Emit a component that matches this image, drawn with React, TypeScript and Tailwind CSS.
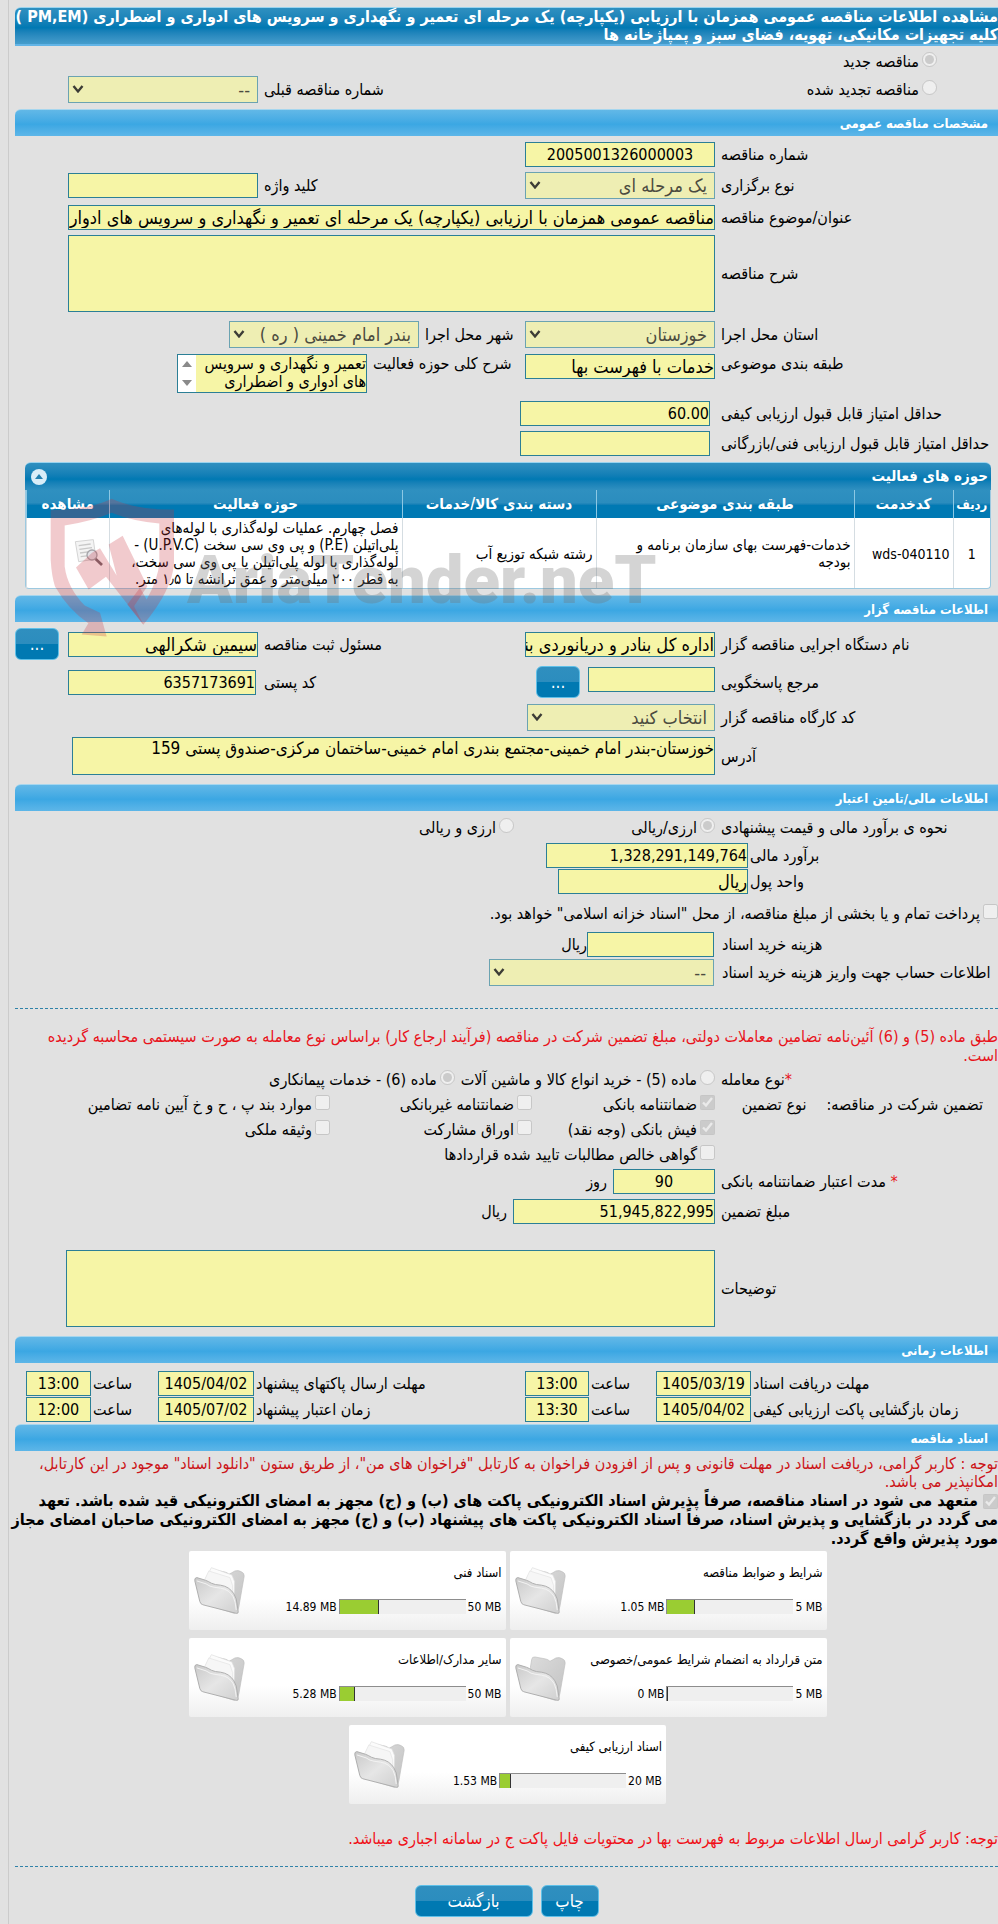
import type { ReactNode } from "react";

const cx = (...parts: (string | undefined)[]) => parts.filter(Boolean).join(" ");

const fieldBase = "rounded-none border border-[#2b7f96] bg-[#f6f5a6] text-black outline-none block";

function Field({ id, value = "", className, kind = "text" }: { id: string; value?: string; className?: string; kind?: "text" | "number" | "center" }) {
  const look = kind === "text" ? "text-right text-[18px]" : kind === "number" ? "text-right text-[16px]" : "text-center text-[16px]";
  return <input id={id} type="text" readOnly defaultValue={value} className={cx(fieldBase, "h-[25px] shrink-0", look, className)} />;
}

function Select({ id, value, className }: { id: string; value: string; className?: string }) {
  return (
    <div className={cx("relative shrink-0", className)}>
      <select id={id} disabled className="block h-[27px] w-full appearance-none rounded-none border border-[#6ba3b1] bg-[#eeeeb3] pr-[7px] pl-5 text-[18px] leading-6 text-[#4b4b40] opacity-100">
        <option>{value}</option>
      </select>
      <svg viewBox="0 0 12 8" className="pointer-events-none absolute top-[9px] left-1 h-2 w-3" fill="none" stroke="#3c3c36" strokeWidth="2.4">
        <path d="M1.500 1 6 6.400 10.500 1" />
      </svg>
    </div>
  );
}

function Label({ htmlFor, children, className }: { htmlFor: string; children: ReactNode; className?: string }) {
  return (
    <label htmlFor={htmlFor} className={cx("block text-left whitespace-nowrap", className)}>
      {children}
    </label>
  );
}

const main = "w-[277px] shrink-0";

function Row({ children, className }: { children: ReactNode; className?: string }) {
  return <div className={cx("flex gap-[6px] pl-[59px]", className)}>{children}</div>;
}

function SectionBar({ title, className }: { title: string; className?: string }) {
  return (
    <h2 className={cx("ml-[6px] flex h-[27px] items-center rounded-tl-md border-t border-[#a6d6ee] bg-linear-to-b from-[#62b8e7] from-0% via-[#3ba7e3] via-55% to-[#5db6e8] to-100% pr-[10px] text-[13px] font-bold text-white", className)}>
      {title}
    </h2>
  );
}

function Tick({ type, id, name, checked, children, className }: { type: "radio" | "checkbox"; id: string; name?: string; checked?: boolean; children: ReactNode; className?: string }) {
  return (
    <span className={cx("flex items-center gap-[3px] whitespace-nowrap", className)}>
      <input type={type} id={id} name={name} disabled defaultChecked={checked} className="mb-1 h-[15px] w-[15px] shrink-0" />
      <label htmlFor={id}>{children}</label>
    </span>
  );
}

const blue = "bg-linear-to-b from-[#2f8fbf] from-0% via-[#2c8dbe] via-49% to-[#0079b2] to-50%";

function BlueButton({ children, className, label }: { children: ReactNode; className?: string; label?: string }) {
  return (
    <button type="button" aria-label={label} className={cx("flex h-8 shrink-0 items-center justify-center rounded-md border border-[#5fc0e8] text-[17px] leading-none text-white", blue, className)}>
      {children}
    </button>
  );
}

function Folder({ empty }: { empty?: boolean }) {
  return (
    <svg viewBox="0 0 160 145" className="h-12 w-[54px] shrink-0">
      <defs>
        <linearGradient id="front" x1="0" y1="0" x2="1" y2="1">
          <stop offset="0" stopColor="#c9c9c9" />
          <stop offset="0.5" stopColor="#e6e6e6" />
          <stop offset="1" stopColor="#cfcfcf" />
        </linearGradient>
        <linearGradient id="back" x1="0" y1="0" x2="1" y2="1">
          <stop offset="0" stopColor="#dcdcdc" />
          <stop offset="1" stopColor="#c2c2c2" />
        </linearGradient>
      </defs>
      <path d="M48 40 52 16q1-8 10-7l32 6q7 1 13 7 8-4 18-10 10-3 19 2 10 4 9 14l-16 92q-2 16-14 20L60 120Z" fill="url(#back)" stroke="#bdbdbd" strokeWidth="2" />
      {!empty && (
        <>
          <path d="M38 32 54 2l62 22 8 20-2 72-84-40Z" fill="#fbfbfb" stroke="#dedede" strokeWidth="2" />
          <path d="M34 38 46 12l64 20 8 24v54L40 80Z" fill="#f6f6f6" stroke="#e2e2e2" strokeWidth="2" />
        </>
      )}
      <path d="M4 42q-2-9 6-10l26 8q8 3 18 9 10 5 28 6 26 4 40 26 9 14 10 34l3 20q1 6-6 5L28 114q-7-2-9-10Z" fill="url(#front)" stroke="#aeaeae" strokeWidth="3" />
      <path d="M10 42l28 9q12 9 24 10l20 3q26 4 38 26 7 14 9 40" fill="none" stroke="#f3f3f3" strokeWidth="3" />
    </svg>
  );
}

function DocCard({ title, used, total, percent }: { title: string; used: string; total: string; percent: number }) {
  return (
    <article className="flex h-[79px] w-[317px] items-center justify-between rounded-xs bg-linear-to-b from-white from-60% to-[#efefef] pl-1">
      <div className="mb-1 flex grow flex-col gap-4 pr-1">
        <h3 className="text-[13px] leading-5 whitespace-nowrap">{title}</h3>
        <div dir="ltr" className="flex items-center justify-end gap-[2px] text-[12px] leading-4 whitespace-nowrap">
          <span>{used}</span>
          <span className="h-[15px] w-[127px] border-t border-l border-[#8d8d8d] bg-[#efefef]">
            <span className="block h-full border-r border-[#333] bg-[#9acd32]" style={{ width: `${percent}%` }} />
          </span>
          <span>{total}</span>
        </div>
      </div>
      <Folder empty={percent === 0} />
    </article>
  );
}

function Watermark() {
  return (
    <div aria-hidden="true" dir="ltr" className="pointer-events-none absolute top-[34px] left-[25px] z-10 flex">
      <svg viewBox="150 20 375 425" className="h-[142px] w-[125px] shrink-0" fill="#c8323c" fillOpacity="0.26">
        <path fillRule="evenodd" d="M152 62Q270 60 335 28q75 34 187 32v160q-4 80-92 186L382 345l38-50 20 35q34-60 38-110V102Q400 96 335 70 275 96 194 108v122q8 64 60 118l46 22 20 71-75-6 20-34q-60-40-100-110-10-30-13-80Z" />
        <path d="M326 165 368 139 442 290 402 350 430 405 318 262 266 300 228 234 276 190 300 176 350 258Z" />
      </svg>
      <span className="mt-[42px] ml-3 font-['Roboto',sans-serif] text-[67px] leading-[84px] font-black whitespace-nowrap text-[#707070]/30">AriaTender.neT</span>
    </div>
  );
}

const th = "border-l border-[#8cc8e4] font-bold text-white";
const td = "border-l border-[#d5dde2] px-[3px] pt-[2px] leading-[17px]";

export default function App() {
  return (
    <div dir="rtl" className="min-h-screen overflow-x-hidden bg-[#e1e1e1] pl-2 font-['DejaVu_Sans_Condensed','DejaVu_Sans',sans-serif] text-[16px] leading-[19px] text-black">
      <main className="min-h-screen border-l border-[#cbcbcb] pt-[7px]">
        <h1 className="ml-[6px] rounded-tl-md border-t border-b-2 border-t-[#9ad3ee] border-b-[#62b4e6] bg-linear-to-b from-[#2f90c0] from-0% via-[#0079b3] via-55% to-[#459dcc] to-100% text-[16px] leading-[18px] font-bold text-white">
          مشاهده اطلاعات مناقصه عمومی همزمان با ارزیابی (یکپارچه) یک مرحله ای تعمیر و نگهداری و سرویس های ادواری و اضطراری (PM,EM )
          <br />
          کلیه تجهیزات مکانیکی، تهویه، فضای سبز و پمپاژخانه ها
        </h1>

        <div className="mt-[3px] flex h-6 items-center pr-[61px]">
          <Tick type="radio" id="new" name="renewal" checked>مناقصه جدید</Tick>
        </div>
        <Row className="mt-[3px] h-[27px] items-center">
          <Tick type="radio" id="renewed" name="renewal" className="pr-[61px]">مناقصه تجدید شده</Tick>
          <Label htmlFor="prev" className="grow">شماره مناقصه قبلی</Label>
          <Select id="prev" value="--" className="w-[190px]" />
        </Row>

        <SectionBar title="مشخصات مناقصه عمومی" className="mt-[6px]" />
        <Row className="mt-[6px] items-center">
          <Label htmlFor="number" className={main}>شماره مناقصه</Label>
          <Field id="number" value="2005001326000003" kind="center" className="w-[190px]" />
        </Row>
        <Row className="mt-[5px] items-center">
          <Label htmlFor="type" className={main}>نوع برگزاری</Label>
          <Select id="type" value="یک مرحله ای" className="w-[190px]" />
          <Label htmlFor="keyword" className="grow">کلید واژه</Label>
          <Field id="keyword" className="w-[190px]" />
        </Row>
        <Row className="mt-[6px] items-center">
          <Label htmlFor="title" className={main}>عنوان/موضوع مناقصه</Label>
          <Field id="title" value="مناقصه عمومی همزمان با ارزیابی (یکپارچه) یک مرحله ای تعمیر و نگهداری و سرویس های ادواری و اضطراری" className="min-w-0 flex-1" />
        </Row>
        <Row className="mt-[5px] items-center">
          <Label htmlFor="desc" className={main}>شرح مناقصه</Label>
          <textarea id="desc" readOnly className={cx(fieldBase, "h-[77px] flex-1 resize-none")} />
        </Row>
        <Row className="mt-[9px] items-center">
          <Label htmlFor="province" className={main}>استان محل اجرا</Label>
          <Select id="province" value="خوزستان" className="w-[190px]" />
          <Label htmlFor="city" className="w-[94px]">شهر محل اجرا</Label>
          <Select id="city" value="بندر امام خمینی ( ره )" className="w-[190px]" />
        </Row>
        <Row className="mt-[6px]">
          <Label htmlFor="category" className={main}>طبقه بندی موضوعی</Label>
          <Field id="category" value="خدمات با فهرست بها" className="w-[190px]" />
          <Label htmlFor="scope" className="w-[146px]">شرح کلی حوزه فعالیت</Label>
          <div className="flex h-[39px] w-[190px] border border-[#2b7f96] bg-[#f6f5a6]">
            <textarea id="scope" readOnly defaultValue={"تعمیر و نگهداری و سرویس های ادواری و اضطراری"} className="block min-w-0 flex-1 resize-none overflow-hidden text-[16px] leading-[18px] outline-none" />
            <span className="flex w-[18px] flex-col items-center justify-between bg-white py-[6px]">
              <svg viewBox="0 0 10 6" className="h-[6px] w-[10px]" fill="#8a8a8a"><path d="M5 0 10 6H0Z" /></svg>
              <svg viewBox="0 0 10 6" className="h-[6px] w-[10px]" fill="#8a8a8a"><path d="M5 6 0 0h10Z" /></svg>
            </span>
          </div>
        </Row>
        <Row className="mt-2 items-center">
          <Label htmlFor="minq" className={main}>حداقل امتیاز قابل قبول ارزیابی کیفی</Label>
          <Field id="minq" value="60.00" kind="number" className="mr-[5px] w-[190px]" />
        </Row>
        <Row className="mt-[5px] items-center">
          <Label htmlFor="mint" className={main}>حداقل امتیاز قابل قبول ارزیابی فنی/بازرگانی</Label>
          <Field id="mint" kind="number" className="mr-[5px] w-[190px]" />
        </Row>

        <section className="relative mt-[6px] mr-[7px] ml-4">
          <header className="flex h-7 items-center justify-between rounded-t-md border-t border-[#9ad3ee] bg-linear-to-b from-[#2f90c0] from-0% via-[#0079b3] via-60% to-[#2f90c0] to-100% pr-[3px] pl-[6px]">
            <h3 className="text-[15px] font-bold text-white">حوزه های فعالیت</h3>
            <button type="button" aria-label="بستن" className="flex h-4 w-4 items-center justify-center rounded-full bg-[#d9edf8]">
              <svg viewBox="0 0 8 5" className="h-[5px] w-2" fill="#2480b0"><path d="M4 0 8 5H0Z" /></svg>
            </button>
          </header>
          <div className="rounded-b-sm border border-t-0 border-[#9cc9e0] bg-white">
            <table className="w-full table-fixed border-collapse text-[15px]">
              <thead>
                <tr className="h-7 bg-linear-to-b from-[#2f90c0] from-0% via-[#2b8dbe] via-45% to-[#0079b3] to-55%">
                  <th className={cx(th, "w-[37px] text-[13px]")}>ردیف</th>
                  <th className={cx(th, "w-[99px]")}>کدخدمت</th>
                  <th className={cx(th, "w-[258px]")}>طبقه بندی موضوعی</th>
                  <th className={cx(th, "w-[194px]")}>دسته بندی کالا/خدمات</th>
                  <th className={cx(th, "w-[293px]")}>حوزه فعالیت</th>
                  <th className={th}>مشاهده</th>
                </tr>
              </thead>
              <tbody>
                <tr className="h-[70px]">
                  <td className={cx(td, "text-center text-[14px]")}>1</td>
                  <td dir="ltr" className={cx(td, "text-right text-[14px]")}>wds-040110</td>
                  <td className={td}>خدمات-فهرست بهای سازمان برنامه و<br />بودجه</td>
                  <td className={td}>رشته شبکه توزیع آب</td>
                  <td className={cx(td, "whitespace-nowrap")}>
                    فصل چهارم. عملیات لوله‌گذاری با لوله‌های<br />
                    پلی‌اتیلن (P.E) و پی وی سی سخت (U.P.V.C) -<br />
                    لوله‌گذاری با لوله پلی‌اتیلن یا پی وی سی سخت،<br />
                    به قطر ۲۰۰ میلی‌متر و عمق ترانشه تا ۱٫۵ متر.
                  </td>
                  <td className={td}>
                    <button type="button" aria-label="مشاهده" className="mr-[2px] block">
                      <svg viewBox="0 0 90 90" className="h-[30px] w-[30px]">
                        <path d="M4 8 58 2l8 58-52 8Z" fill="#f4f4f4" stroke="#d4d4d4" strokeWidth="3" />
                        <path d="M14 20l36-5M16 31l38-5M18 42l30-4M20 53l24-3" stroke="#c8c8c8" strokeWidth="4" />
                        <circle cx="54" cy="48" r="15" fill="#e3e3e8" stroke="#a5a5aa" strokeWidth="4" />
                        <path d="M65 60 84 78" stroke="#75696e" strokeWidth="8" />
                      </svg>
                    </button>
                  </td>
                </tr>
              </tbody>
            </table>
          </div>
          <Watermark />
        </section>

        <SectionBar title="اطلاعات مناقصه گزار" className="mt-[6px]" />
        <div className="mt-[6px] flex items-center gap-[6px] pl-[6px]">
          <Label htmlFor="org" className={main}>نام دستگاه اجرایی مناقصه گزار</Label>
          <Field id="org" value="اداره کل بنادر و دریانوردی بندر امام خمینی" className="w-[190px]" />
          <Label htmlFor="officer" className="grow">مسئول ثبت مناقصه</Label>
          <Field id="officer" value="سیمین شکرالهی" className="w-[190px]" />
          <BlueButton label="انتخاب مسئول" className="mr-[3px] w-11">...</BlueButton>
        </div>
        <Row className="mt-[6px] items-center">
          <Label htmlFor="ref" className={main}>مرجع پاسخگویی</Label>
          <Field id="ref" className="mb-[5px] w-[127px]" />
          <BlueButton label="انتخاب مرجع" className="mr-[2px] w-11">...</BlueButton>
          <Label htmlFor="postal" className="grow">کد پستی</Label>
          <Field id="postal" value="6357173691" kind="number" className="mr-[2px] w-[188px]" />
        </Row>
        <Row className="mt-[6px] items-center">
          <Label htmlFor="workshop" className={main}>کد کارگاه مناقصه گزار</Label>
          <Select id="workshop" value="انتخاب کنید" className="w-[188px]" />
        </Row>
        <Row className="mt-[6px] items-center">
          <Label htmlFor="address" className={main}>آدرس</Label>
          <textarea id="address" readOnly defaultValue="خوزستان-بندر امام خمینی-مجتمع بندری امام خمینی-ساختمان مرکزی-صندوق پستی 159" className={cx(fieldBase, "ml-1 h-[38px] flex-1 resize-none overflow-hidden text-[17px] leading-5")} />
        </Row>

        <SectionBar title="اطلاعات مالی/تامین اعتبار" className="mt-[9px]" />
        <Row className="mt-[7px] items-center">
          <span className={cx(main, "text-left whitespace-nowrap")}>نحوه ی برآورد مالی و قیمت پیشنهادی</span>
          <Tick type="radio" id="cur1" name="currency" checked className="w-[195px]">ارزی/ریالی</Tick>
          <Tick type="radio" id="cur2" name="currency">ارزی و ریالی</Tick>
        </Row>
        <div className="mt-[6px] grid grid-cols-[248px_1fr] items-center gap-x-[2px] gap-y-[1px]">
          <Label htmlFor="estimate">برآورد مالی</Label>
          <Field id="estimate" value="1,328,291,149,764" kind="number" className="w-[202px]" />
          <Label htmlFor="unit">واحد پول</Label>
          <Field id="unit" value="ریال" className="w-[190px]" />
        </div>
        <div className="mt-[10px] flex">
          <Tick type="checkbox" id="treasury">پرداخت تمام و یا بخشی از مبلغ مناقصه، از محل "اسناد خزانه اسلامی" خواهد بود.</Tick>
        </div>
        <div className="mt-[9px] grid grid-cols-[276px_1fr] items-center gap-x-2 gap-y-[2px]">
          <Label htmlFor="fee">هزینه خرید اسناد</Label>
          <div className="flex items-center">
            <Field id="fee" kind="number" className="w-[127px]" />
            <span>ریال</span>
          </div>
          <Label htmlFor="account">اطلاعات حساب جهت واریز هزینه خرید اسناد</Label>
          <Select id="account" value="--" className="w-[225px]" />
        </div>
        <hr className="mt-[22px] ml-[6px] border-t border-dashed border-[#2f82a8]" />

        <p className="mt-[18px] pl-3 leading-[19px] text-[#e8141c]">
          طبق ماده (5) و (6) آئین‌نامه تضامین معاملات دولتی، مبلغ تضمین شرکت در مناقصه (فرآیند ارجاع کار) براساس نوع معامله به صورت سیستمی محاسبه گردیده<br />
          است.
        </p>
        <Row className="mt-[5px] items-center">
          <span className={cx(main, "text-left whitespace-nowrap")}><span className="text-[#e8141c]">*</span>نوع معامله</span>
          <Tick type="radio" id="deal5" name="deal">ماده (5) - خرید انواع کالا و ماشین آلات</Tick>
          <Tick type="radio" id="deal6" name="deal" checked>ماده (6) - خدمات پیمانکاری</Tick>
        </Row>
        <div className="mt-[6px] grid grid-cols-[283px_183px_202px_1fr] gap-y-[6px]">
          <span className="row-span-3 flex gap-5 pr-[15px]"><span>تضمین شرکت در مناقصه:</span><span>نوع تضمین</span></span>
          <Tick type="checkbox" id="g1" checked>ضمانتنامه بانکی</Tick>
          <Tick type="checkbox" id="g2">ضمانتنامه غیربانکی</Tick>
          <Tick type="checkbox" id="g3">موارد بند پ ، ح و خ آیین نامه تضامین</Tick>
          <Tick type="checkbox" id="g4" checked>فیش بانکی (وجه نقد)</Tick>
          <Tick type="checkbox" id="g5">اوراق مشارکت</Tick>
          <Tick type="checkbox" id="g6">وثیقه ملکی</Tick>
          <Tick type="checkbox" id="g7" className="col-span-3">گواهی خالص مطالبات تایید شده قراردادها</Tick>
        </div>
        <Row className="mt-[5px] items-center">
          <Label htmlFor="validity" className={main}><span className="text-[#e8141c]">*</span> مدت اعتبار ضمانتنامه بانکی</Label>
          <Field id="validity" value="90" kind="center" className="w-[102px]" />
          <span>روز</span>
        </Row>
        <Row className="mt-[5px] items-center">
          <Label htmlFor="amount" className={main}>مبلغ تضمین</Label>
          <Field id="amount" value="51,945,822,995" kind="number" className="w-[202px]" />
          <span>ریال</span>
        </Row>
        <div className="mt-[26px] flex items-center gap-[6px] pl-[57px]">
          <Label htmlFor="notes" className={main}>توضیحات</Label>
          <textarea id="notes" readOnly className={cx(fieldBase, "h-[77px] flex-1 resize-none")} />
        </div>

        <SectionBar title="اطلاعات زمانی" className="mt-[9px]" />
        <div className="mt-2 grid grid-cols-[245px_95px_63px_64px_1fr_96px_63px_65px] items-center gap-x-[2px] gap-y-[1px] pl-[17px]">
          <Label htmlFor="d1">مهلت دریافت اسناد</Label>
          <Field id="d1" value="1405/03/19" kind="center" />
          <Label htmlFor="t1">ساعت</Label>
          <Field id="t1" value="13:00" kind="center" />
          <Label htmlFor="d2">مهلت ارسال پاکتهای پیشنهاد</Label>
          <Field id="d2" value="1405/04/02" kind="center" />
          <Label htmlFor="t2">ساعت</Label>
          <Field id="t2" value="13:00" kind="center" />
          <Label htmlFor="d3">زمان بازگشایی پاکت ارزیابی کیفی</Label>
          <Field id="d3" value="1405/04/02" kind="center" />
          <Label htmlFor="t3">ساعت</Label>
          <Field id="t3" value="13:30" kind="center" />
          <Label htmlFor="d4">زمان اعتبار پیشنهاد</Label>
          <Field id="d4" value="1405/07/02" kind="center" />
          <Label htmlFor="t4">ساعت</Label>
          <Field id="t4" value="12:00" kind="center" />
        </div>

        <SectionBar title="اسناد مناقصه" className="mt-[2px]" />
        <p className="mt-1 leading-[18px] text-[#cc1418]">
          توجه : کاربر گرامی، دریافت اسناد در مهلت قانونی و پس از افزودن فراخوان به کارتابل "فراخوان های من"، از طریق ستون "دانلود اسناد" موجود در این کارتابل،<br />
          امکانپذیر می باشد.
        </p>
        <p className="leading-[19px] font-bold whitespace-nowrap">
          <input type="checkbox" id="commit" disabled defaultChecked className="h-[15px] w-[15px] align-middle" />{" "}
          <label htmlFor="commit">
            متعهد می شود در اسناد مناقصه، صرفاً پذیرش اسناد الکترونیکی پاکت های (ب) و (ج) مجهز به امضای الکترونیکی قید شده باشد. تعهد<br />
            می گردد در بازگشایی و پذیرش اسناد، صرفاً اسناد الکترونیکی پاکت های پیشنهاد (ب) و (ج) مجهز به امضای الکترونیکی صاحبان امضای مجاز<br />
            مورد پذیرش واقع گردد.
          </label>
        </p>
        <div className="mt-[3px] flex flex-col items-center gap-2 pl-2">
          <div className="flex gap-1">
            <DocCard title="شرایط و ضوابط مناقصه" used="1.05 MB" total="5 MB" percent={22} />
            <DocCard title="اسناد فنی" used="14.89 MB" total="50 MB" percent={31} />
          </div>
          <div className="flex gap-1">
            <DocCard title="متن قرارداد به انضمام شرایط عمومی/خصوصی" used="0 MB" total="5 MB" percent={0} />
            <DocCard title="سایر مدارک/اطلاعات" used="5.28 MB" total="50 MB" percent={12} />
          </div>
          <DocCard title="اسناد ارزیابی کیفی" used="1.53 MB" total="20 MB" percent={9} />
        </div>

        <p className="mt-[25px] text-[#f01018]">توجه: کاربر گرامی ارسال اطلاعات مربوط به فهرست بها در محتویات فایل پاکت ج در سامانه اجباری میباشد.</p>
        <hr className="mt-[18px] ml-[6px] border-t border-dashed border-[#2f82a8]" />
        <div className="mt-[18px] flex justify-center gap-2 pb-[6px] pl-[6px]">
          <BlueButton className="w-[58px]">چاپ</BlueButton>
          <BlueButton className="w-[118px]">بازگشت</BlueButton>
        </div>
      </main>
    </div>
  );
}
